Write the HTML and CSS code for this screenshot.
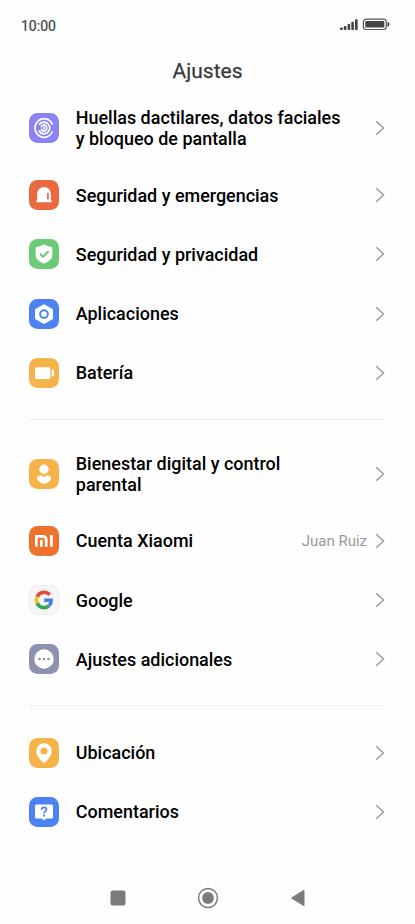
FILE: index.html
```html
<!DOCTYPE html>
<html lang="es">
<head>
<meta charset="utf-8">
<title>Ajustes</title>
<link rel="stylesheet" href="styles.css">
</head>
<body>
<svg class="defs" aria-hidden="true"><symbol id="chev" viewBox="0 0 10 16"><path d="M1.200 1.200 8.500 8 1.200 14.800" fill="none" stroke="#999" stroke-width="1.400"/></symbol></svg>
<header class="status">
  <span class="time">10:00</span>
  <svg class="indicators" width="52" height="14" viewBox="0 0 52 14">
    <g fill="#444"><rect x="1" y="9.500" width="2.800" height="2.500" rx=".8"/><rect x="4.800" y="8" width="2.600" height="4" rx=".8"/><rect x="8.600" y="6" width="2.600" height="6" rx=".8"/><rect x="12.300" y="3.700" width="2.600" height="8.300" rx=".8"/><rect x="16" y="1.200" width="2.700" height="10.800" rx=".8"/><rect x="26.300" y="3" width="19" height="6.600" rx="1.200"/><path d="M48.500 4.200h.8q1 0 1 1v2.200q0 1-1 1h-.8z"/></g>
    <rect x="24.400" y="1.100" width="22.900" height="10.400" rx="3" fill="none" stroke="#555" stroke-width="1.200"/>
  </svg>
</header>
<h1 class="title">Ajustes</h1>
<main class="list">
  <section class="group">
    <div class="row tall">
      <svg class="icon purple" viewBox="0 0 30 30"><g fill="none" stroke="#fff" stroke-width="1.700" stroke-linecap="round"><path d="M23.200 11A9 9.300 0 1 0 23.200 19"/><path d="M10.500 11.300A5.800 5.800 0 1 1 10 18"/><path d="M12.300 13.600a2.900 3.100 0 1 1 0 2.900"/><path d="M15 14.400v1.300"/></g></svg>
      <span class="label">Huellas dactilares, datos faciales<br>y bloqueo de pantalla</span><svg class="chevron"><use href="#chev"/></svg>
    </div>
    <div class="row">
      <svg class="icon red" viewBox="0 0 30 30"><path d="M8.100 20.500V13.800a6.900 6.900 0 0 1 13.800 0v6.700q.8 0 .8.800v1H7.300v-1q0-.8.800-.8z" fill="#fff"/><path d="M18.900 13.500v5.300" stroke="#ec6841" stroke-width="1.700" stroke-linecap="round"/></svg>
      <span class="label">Seguridad y emergencias</span><svg class="chevron"><use href="#chev"/></svg>
    </div>
    <div class="row">
      <svg class="icon green" viewBox="0 0 30 30"><path d="M15 5.500q1 0 2 .7 2.500 1.300 5.200 1.700 1.200.2 1.200 1.500v6.300c0 4.200-4 7-7.400 8.600q-1 .5-2 0C10.600 22.700 6.600 19.900 6.600 15.700V9.400q0-1.300 1.200-1.500Q10.500 7.500 13 6.200q1-.7 2-.7z" fill="#fff"/><path d="m11 14.700 3.100 3.100 5.400-5.800" fill="none" stroke="#6bcb77" stroke-width="2"/></svg>
      <span class="label">Seguridad y privacidad</span><svg class="chevron"><use href="#chev"/></svg>
    </div>
    <div class="row">
      <svg class="icon blue" viewBox="0 0 30 30"><path d="m15 6.300 8 4.500v8.600l-8 4.500-8-4.500v-8.600z" fill="#fff" stroke="#fff" stroke-width="2" stroke-linejoin="round"/><circle cx="15" cy="15.100" r="3.900" fill="none" stroke="#4d82f5" stroke-width="1.900"/></svg>
      <span class="label">Aplicaciones</span><svg class="chevron"><use href="#chev"/></svg>
    </div>
    <div class="row">
      <svg class="icon amber" viewBox="0 0 30 30"><rect x="6" y="9.200" width="15.300" height="11.800" rx="1.500" fill="#fff"/><rect x="22.700" y="11.500" width="2.300" height="7" rx=".8" fill="#fff"/></svg>
      <span class="label">Batería</span><svg class="chevron"><use href="#chev"/></svg>
    </div>
  </section>
  <section class="group">
    <div class="row tall">
      <svg class="icon amber" viewBox="0 0 30 30"><circle cx="15" cy="10.300" r="4.700" fill="#fff"/><path d="M15 18.200c2-2 4-2 5.700-1 1.800 1.200 1.800 3.300.2 4.500-1.500 1.300-3.800 2.800-5.900 3-2.100-.2-4.400-1.700-5.900-3-1.600-1.200-1.600-3.300.2-4.500 1.700-1 3.700-1 5.700 1z" fill="#fff"/></svg>
      <span class="label">Bienestar digital y control<br>parental</span><svg class="chevron"><use href="#chev"/></svg>
    </div>
    <div class="row">
      <svg class="icon orange" viewBox="0 0 30 30"><path d="M7.300 20.800V10.300h6.300q3.600 0 3.600 3.600v6.900M12.300 13.700v7.100M22.400 9v11.800" fill="none" stroke="#fff" stroke-width="2.700"/></svg>
      <span class="label">Cuenta Xiaomi</span><span class="value">Juan Ruiz</span><svg class="chevron"><use href="#chev"/></svg>
    </div>
    <div class="row">
      <svg class="icon pale" viewBox="1 1 28 28"><g fill="none" stroke-width="3.600"><path d="M20.700 9.700A7.600 7.600 0 0 0 8.200 11.700" stroke="#e34b3f"/><path d="M8.200 11.700a7.600 7.600 0 0 0 0 6.700" stroke="#f5bd28"/><path d="M8.200 18.400a7.600 7.600 0 0 0 11.700 2.400" stroke="#35a454"/><path d="M19.900 20.800a7.600 7.600 0 0 0 2.300-5.600H15.200" stroke="#467fe5"/></g></svg>
      <span class="label">Google</span><svg class="chevron"><use href="#chev"/></svg>
    </div>
    <div class="row">
      <svg class="icon slate" viewBox="0 0 30 30"><circle cx="15" cy="15" r="9.700" fill="#fff"/><g fill="#8d92b1"><circle cx="10.500" cy="15" r="1.350"/><circle cx="15" cy="15" r="1.350"/><circle cx="19.500" cy="15" r="1.350"/></g></svg>
      <span class="label">Ajustes adicionales</span><svg class="chevron"><use href="#chev"/></svg>
    </div>
  </section>
  <section class="group">
    <div class="row">
      <svg class="icon amber" viewBox="0 0 30 30"><path d="M15 5.300a7.700 7.700 0 0 1 7.700 7.700c0 4.700-3.800 8.600-6.400 11.300q-1.300 1.300-2.600 0C11.100 21.600 7.300 17.700 7.300 13A7.700 7.700 0 0 1 15 5.300z" fill="#fff"/><circle cx="15" cy="13" r="3.600" fill="#f5b34a"/></svg>
      <span class="label">Ubicación</span><svg class="chevron"><use href="#chev"/></svg>
    </div>
    <div class="row">
      <svg class="icon blue" viewBox="0 0 30 30"><path d="M7.500 7.500h15q1.500 0 1.500 1.500v11q0 1.500-1.500 1.500h-5.300L15 23.500l-2.200-2H7.500Q6 21.500 6 20V9q0-1.500 1.500-1.500z" fill="#fff"/><path d="M12.500 12.700c.2-3.200 5-3 5-.2 0 1.900-2.400 1.900-2.400 4" fill="none" stroke="#4d82f5" stroke-width="1.700"/><circle cx="15.100" cy="18.700" r="1.100" fill="#4d82f5"/></svg>
      <span class="label">Comentarios</span><svg class="chevron"><use href="#chev"/></svg>
    </div>
  </section>
</main>
<nav class="nav">
  <svg viewBox="0 0 22 22"><rect x="3.500" y="3.500" width="15" height="15" rx="2.200" fill="#7b7b7b"/></svg>
  <svg viewBox="0 0 22 22"><circle cx="11" cy="11" r="9.500" fill="none" stroke="#7b7b7b" stroke-width="1.500"/><circle cx="11" cy="11" r="5.900" fill="#7b7b7b"/></svg>
  <svg viewBox="0 0 22 22"><path d="M4.500 11 17 3.300v15.400z" fill="#7b7b7b" stroke="#7b7b7b" stroke-linejoin="round"/></svg>
</nav>
</body>
</html>
```
FILE: styles.css
```css
* { box-sizing: border-box; }
body {
  margin: 0;
  width: 415px;
  height: 924px;
  overflow: hidden;
  display: flex;
  flex-direction: column;
  background: #fefefe;
  font-family: Roboto, sans-serif;
  color: #000;
}
.defs { display: none; }
.status {
  height: 32px;
  flex: none;
  display: flex;
  justify-content: space-between;
  align-items: flex-start;
  padding: 18px 24px 0 21px;
  border-radius: 48px 48px 0 0;
  background: #fbfdfe;
}
.time { font-size: 14px; line-height: 16px; font-weight: 400; color: #404040; -webkit-text-stroke: 0.2px #404040; }
.title {
  margin: 0;
  height: 58.6px;
  flex: none;
  padding-top: 26px;
  font-size: 21px;
  line-height: 26px;
  font-weight: 400;
  text-align: center;
  color: #383838;
  -webkit-text-stroke: 0.25px #383838;
}
.list { padding: 0 30px 0 29px; }
.group + .group { margin-top: 16.5px; padding-top: 16.5px; border-top: 1px solid #ededed; }
.row { height: 59.2px; display: flex; align-items: center; }
.tall { height: 75px; }
.icon { width: 30px; height: 30px; flex: none; border-radius: 8.5px; margin-right: 16.8px; }
.label { flex: 1; font-size: 17.94px; line-height: 21px; font-weight: 500; white-space: nowrap; }
.value { font-size: 15px; color: #999; margin-right: 8px; }
.chevron { width: 10px; height: 16px; flex: none; }
.purple { background: #8b83f5; }
.red { background: #ec6841; }
.green { background: #6bcb77; }
.blue { background: #4d82f5; }
.amber { background: #f5b34a; }
.orange { background: #ec722e; }
.pale { background: #f6f6f6; border: 1px solid #eee; }
.slate { background: #8d92b1; }
.nav { margin-top: auto; height: 52px; padding: 0 106px 0 107px; display: flex; justify-content: space-between; align-items: center; }
.nav svg { width: 22px; height: 22px; }
```
